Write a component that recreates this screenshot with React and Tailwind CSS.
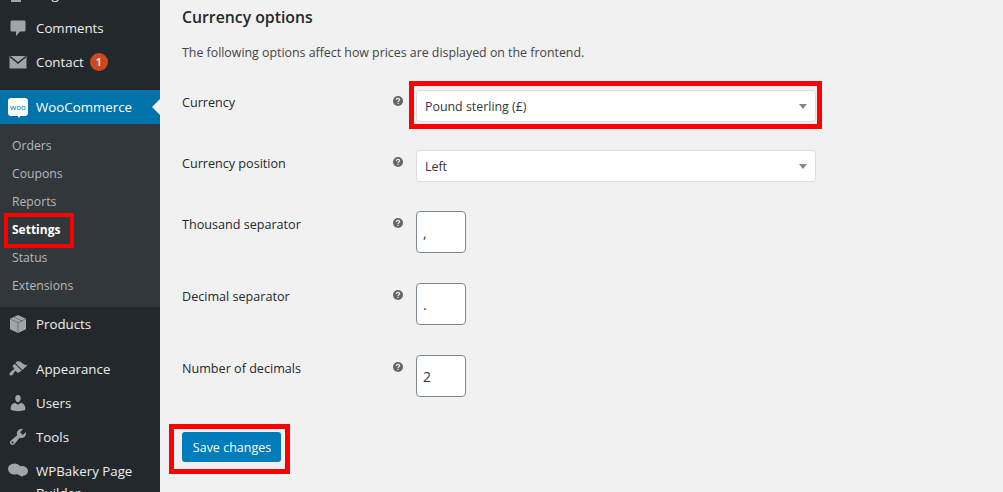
import React from 'react';

// Dashicons-style glyphs for the admin menu (20x20 viewBox)
const icons = {
  page: <path d="M6 15V2h10v13H6zm-1 1h8v2H3V5h2v11z" />,
  comments: <path d="M4 2.500h12c1.100 0 1.500.6 1.500 1.500v8c0 1-.5 1.500-1.500 1.500h-4l-4 4.500v-4.500H4c-1 0-1.500-.5-1.500-1.500V4c0-.9.4-1.500 1.500-1.500z" />,
  email: (
    <>
      <rect x="1.500" y="4" width="17" height="12.500" />
      <path d="M2 4.500l8 6.500 8-6.500" fill="none" stroke="#23282d" strokeWidth="1.600" />
    </>
  ),
  products: (
    <>
      <path d="M10 1l8 3.800v10.400L10 19l-8-3.800V4.800L10 1z" />
      <path d="M2.500 5L10 8.800 17.500 5M10 8.800V18.500M6 3l8 4" fill="none" stroke="#5b6065" strokeWidth=".7" />
    </>
  ),
  appearance: <path d="M14.48 11.06L7.41 3.99l1.5-1.5c.5-.56 2.3-.47 3.51.32 1.21.8 1.43 1.28 2.91 2.1 1.18.64 2.45 1.26 4.45.85zm-.71.71L6.7 4.7 4.93 6.47c-.39.39-.39 1.02 0 1.41l1.06 1.06c.39.39.39 1.03 0 1.42-.6.6-1.43 1.11-2.21 1.69-.35.26-.7.53-1.01.84C1.43 13.71.96 15.12 1.85 16s2.3.41 3.13-.55c.55-.8.88-2.26 1.8-3.07.4-.39 1.03-.39 1.42 0l1.06 1.06c.39.39 1.02.39 1.41 0z" />,
  users: <path d="M10 9.25c-2.27 0-2.73-3.44-2.73-3.44C7 4.02 7.82 2 9.97 2c2.16 0 2.98 2.02 2.71 3.81 0 0-.41 3.44-2.68 3.44zm0 2.57L12.72 10c2.39 0 4.52 2.33 4.52 4.53v2.49s-3.65 1.13-7.24 1.13c-3.65 0-7.24-1.13-7.24-1.13v-2.49c0-2.25 1.94-4.48 4.47-4.48z" />,
  tools: <path d="M16.68 9.77c-1.34 1.34-3.3 1.67-4.95.99l-5.41 6.52c-.99.99-2.59.99-3.58 0s-.99-2.59 0-3.57l6.52-5.42c-.68-1.65-.35-3.61.99-4.95 1.28-1.28 3.12-1.62 4.72-1.06l-2.89 2.89 2.82 2.82 2.86-2.87c.53 1.58.18 3.39-1.08 4.65zM3.81 16.21c.4.39 1.04.39 1.43 0 .4-.4.4-1.04 0-1.43-.39-.4-1.03-.4-1.43 0-.39.39-.39 1.03 0 1.43z" />,
  bakery: (
    <>
      <ellipse cx="6.500" cy="9" rx="6.500" ry="5.500" />
      <ellipse cx="14" cy="11" rx="6" ry="5" />
      <path d="M11 14l3.500 3 .5-3z" />
    </>
  ),
};

function MenuIcon({ name }) {
  return (
    <svg viewBox="0 0 20 20" className="w-5 h-5 shrink-0 fill-[#a0a5aa]">
      {icons[name]}
    </svg>
  );
}

function MenuItem({ icon, label, badge }) {
  return (
    <div className="flex items-center h-[34px] pl-2 text-[13.300px] text-[#eeeeee]">
      <MenuIcon name={icon} />
      <span className="ml-2 pt-[2px]">{label}</span>
      {badge && (
        <span className="ml-[6px] flex items-center justify-center w-[18px] h-[18px] rounded-full bg-[#ca4a1f] text-white text-[11px] font-semibold">
          {badge}
        </span>
      )}
    </div>
  );
}

function Sidebar() {
  const submenu = ['Orders', 'Coupons', 'Reports', 'Settings', 'Status', 'Extensions'];

  return (
    <aside className="w-[160px] shrink-0 bg-[#23282d] -mt-[23px]">
      <MenuItem icon="page" label="Pages" />
      <MenuItem icon="comments" label="Comments" />
      <MenuItem icon="email" label="Contact" badge="1" />
      <div className="h-[11px]" />

      <div className="relative flex items-center h-[34px] pl-2 bg-[#0073aa] text-[13.300px] text-white">
        <span className="relative flex items-center justify-center w-5 h-[18px] rounded-[3px] bg-white text-[8px] leading-none text-[#0073aa]">
          woo
          <span className="absolute -bottom-[2px] left-[9px] w-0 h-0 border-l-[2px] border-r-[2px] border-t-[3px] border-l-transparent border-r-transparent border-t-white" />
        </span>
        <span className="ml-2 pt-[2px]">WooCommerce</span>
        <span className="absolute right-0 top-[9px] w-0 h-0 border-y-[8px] border-r-[8px] border-y-transparent border-r-[#f1f1f1]" />
      </div>

      <div className="bg-[#32373c] pt-[7px] pb-[8px] text-[12.200px] text-[#b4b9be]">
        {submenu.map((item) => (
          <div key={item} className="relative flex items-center h-[28px] pl-3 pt-[2px]">
            {item === 'Settings' ? (
              <>
                <span className="font-bold text-[12px] text-white">{item}</span>
                <span className="absolute -top-[2px] left-1 w-[70px] h-[35px] border-[4px] border-[#ff0000]" />
              </>
            ) : (
              item
            )}
          </div>
        ))}
      </div>

      <MenuItem icon="products" label="Products" />
      <div className="h-[11px]" />
      <MenuItem icon="appearance" label="Appearance" />
      <MenuItem icon="users" label="Users" />
      <MenuItem icon="tools" label="Tools" />
      <div className="flex pl-2 pt-[6px] text-[13.300px] leading-[22px] text-[#eeeeee]">
        <MenuIcon name="bakery" />
        <span className="ml-2">WPBakery Page Builder</span>
      </div>
    </aside>
  );
}

function HelpTip() {
  return (
    <svg viewBox="0 0 10 10" className="w-[10px] h-[10px] mt-[7px] shrink-0">
      <circle cx="5" cy="5" r="5" fill="#666666" />
      <path d="M3.400 3.900c0-1 .7-1.500 1.600-1.500s1.600.5 1.600 1.300c0 1.100-1.500 1-1.500 2.200" fill="none" stroke="#f1f1f1" strokeWidth="1.100" />
      <rect x="4.400" y="6.700" width="1.300" height="1.200" fill="#f1f1f1" />
    </svg>
  );
}

function Row({ label, className, fieldClassName = '', children }) {
  return (
    <div className={`flex ${className}`}>
      <label className="w-[211px] shrink-0 pt-[4px] text-[12.600px] leading-[20px] font-medium text-[#23282d]">{label}</label>
      <HelpTip />
      <div className={`ml-[13px] ${fieldClassName}`}>{children}</div>
    </div>
  );
}

function SelectBox({ value, highlighted }) {
  return (
    <div className="relative flex items-center justify-between w-[400px] h-[32px] pl-[8px] pr-[8px] bg-white border border-[#dddddd] rounded-[4px] text-[12.400px] text-[#32373c]">
      <span className="pt-[3px]">{value}</span>
      <span className="w-0 h-0 border-x-[4px] border-t-[5px] border-x-transparent border-t-[#888888]" />
      {highlighted && (
        <span className="absolute -left-2 -top-[10px] w-[413px] h-[48px] border-[5px] border-[#ff0000]" />
      )}
    </div>
  );
}

function SmallInput({ value }) {
  return (
    <div className="flex items-center w-[50px] h-[42px] pl-[6px] bg-white border border-[#7e8993] rounded-[4px] text-[14px] text-[#32373c]">
      {value}
    </div>
  );
}

export default function App() {
  return (
    <div className="flex w-[1003px] h-[492px] overflow-hidden bg-[#f1f1f1] font-['Open_Sans','Noto_Sans',sans-serif]">
      <Sidebar />
      <main className="flex-1 pl-[22px] pt-[6px]">
        <h2 className="text-[15.800px] leading-[22px] font-semibold text-[#23282d]">Currency options</h2>
        <p className="mt-[15px] text-[12.370px] leading-[20px] text-[#444444]">
          The following options affect how prices are displayed on the frontend.
        </p>

        <Row label="Currency" className="mt-[26px]" fieldClassName="mt-[1px]">
          <SelectBox value="Pound sterling (£)" highlighted />
        </Row>
        <Row label="Currency position" className="mt-[28px]">
          <SelectBox value="Left" />
        </Row>
        <Row label="Thousand separator" className="mt-[29px]">
          <SmallInput value="," />
        </Row>
        <Row label="Decimal separator" className="mt-[30px]">
          <SmallInput value="." />
        </Row>
        <Row label="Number of decimals" className="mt-[30px]">
          <SmallInput value="2" />
        </Row>

        <div className="relative mt-[35px] w-[99px]">
          <button className="w-[99px] h-[30px] pt-[2px] pl-[1px] rounded-[3px] bg-[#007cba] text-[12.500px] text-white">Save changes</button>
          <span className="absolute -left-[13px] -top-[8px] w-[121px] h-[50px] border-[5px] border-[#ff0000]" />
        </div>
      </main>
    </div>
  );
}
